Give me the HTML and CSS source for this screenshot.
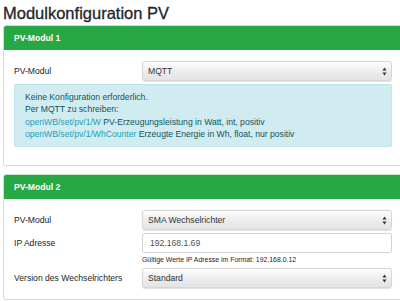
FILE: index.html
```html
<!DOCTYPE html>
<html lang="de">
<head>
    <meta charset="UTF-8">
    <meta name="viewport" content="width=device-width, initial-scale=1.0">
    <title>Modulkonfiguration PV</title>
    <link rel="stylesheet" href="styles.css">
</head>
<body>
    <div class="page">
        <h1>Modulkonfiguration PV</h1>

        <!-- PV-Modul 1 -->
        <div class="card">
            <div class="card-header">PV-Modul 1</div>
            <div class="card-body">
                <div class="form-row">
                    <label>PV-Modul</label>
                    <div class="select-wrap">
                        <select><option>MQTT</option></select>
                        <svg class="caret" width="5" height="9" viewBox="0 0 5 9"><path d="M2.5 0.5 L4.6 3.6 L0.4 3.6 Z M2.5 8.5 L4.6 5.4 L0.4 5.4 Z" fill="#3a3a3a"/></svg>
                    </div>
                </div>
                <div class="alert">
                    Keine Konfiguration erforderlich.<br>
                    Per MQTT zu schreiben:<br>
                    <span class="topic">openWB/set/pv/1/W</span> PV-Erzeugungsleistung in Watt, int, positiv<br>
                    <span class="topic">openWB/set/pv/1/WhCounter</span> Erzeugte Energie in Wh, float, nur positiv
                </div>
            </div>
        </div>

        <!-- PV-Modul 2 -->
        <div class="card">
            <div class="card-header">PV-Modul 2</div>
            <div class="card-body">
                <div class="form-row">
                    <label>PV-Modul</label>
                    <div class="select-wrap">
                        <select><option>SMA Wechselrichter</option></select>
                        <svg class="caret" width="5" height="9" viewBox="0 0 5 9"><path d="M2.5 0.5 L4.6 3.6 L0.4 3.6 Z M2.5 8.5 L4.6 5.4 L0.4 5.4 Z" fill="#3a3a3a"/></svg>
                    </div>
                </div>
                <div class="form-row">
                    <label>IP Adresse</label>
                    <div>
                        <input type="text" value="192.168.1.69">
                        <small class="help">Gültige Werte IP Adresse im Format: 192.168.0.12</small>
                    </div>
                </div>
                <div class="form-row">
                    <label>Version des Wechselrichters</label>
                    <div class="select-wrap">
                        <select><option>Standard</option></select>
                        <svg class="caret" width="5" height="9" viewBox="0 0 5 9"><path d="M2.5 0.5 L4.6 3.6 L0.4 3.6 Z M2.5 8.5 L4.6 5.4 L0.4 5.4 Z" fill="#3a3a3a"/></svg>
                    </div>
                </div>
            </div>
        </div>
    </div>
</body>
</html>
```

FILE: styles.css
```css
html, body {
    overflow: hidden;
}
body {
    font-family: "Liberation Sans", Arial, sans-serif;
    font-size: 8.6px;
    line-height: 12.3px;
    color: #212529;
    background-color: #fff;
    margin: 0;
    padding: 0;
}
.page {
    padding: 0 3px;
}
h1 {
    font-size: 16.5px;
    font-weight: normal;
    line-height: 20px;
    margin: 3px 0 2px;
    color: #212529;
    -webkit-text-stroke: 0.3px #212529; /* medium weight look */
}
.card {
    border: 1px solid #c3e6cb;
    border-radius: 3px;
    margin-right: -6px;
    margin-bottom: 8px;
}
.card-header {
    background-color: #28a745;
    color: #fff;
    font-weight: bold;
    padding: 6px 10px 5px;
    line-height: 13px;
    border-radius: 2px 2px 0 0;
}
.card-body {
    padding: 11px 10px 11px;
}
.form-row {
    display: grid;
    grid-template-columns: 128px 1fr;
    align-items: start;
    margin-bottom: 3px;
}
.form-row label {
    line-height: 20px;
}
.card-body .form-row:last-child {
    margin-bottom: 0;
}
.select-wrap {
    position: relative;
}
select {
    appearance: none;
    -webkit-appearance: none;
    display: block;
    width: 100%;
    height: 20px;
    margin: 0;
    padding: 0 14px 0 5px;
    font-family: "Liberation Sans", Arial, sans-serif;
    font-size: 8.6px;
    color: #333;
    background: linear-gradient(#fdfdfd, #ececec 55%, #e4e4e4);
    border: 1px solid #d6d6d6;
    border-radius: 3px;
    box-shadow: 0 0.5px 1px rgba(0, 0, 0, 0.12);
}
.caret {
    position: absolute;
    right: 5px;
    top: 5.5px;
}
input {
    display: block;
    box-sizing: border-box;
    width: 100%;
    height: 20px;
    margin: 0;
    padding: 0 7px;
    font-family: "Liberation Sans", Arial, sans-serif;
    font-size: 8.6px;
    color: #495057;
    background: #fff;
    border: 1px solid #ced4da;
    border-radius: 2px;
}
.help {
    display: block;
    font-size: 6.9px;
    line-height: 10px;
    margin: 2px 0 0;
    color: #212529;
}
.alert {
    background-color: #d1ecf1;
    border: 1px solid #bee5eb;
    border-radius: 2px;
    color: #0c5460;
    padding: 6px 10px;
    margin-bottom: 7px;
}
.topic {
    color: #17a2b8;
}
```
